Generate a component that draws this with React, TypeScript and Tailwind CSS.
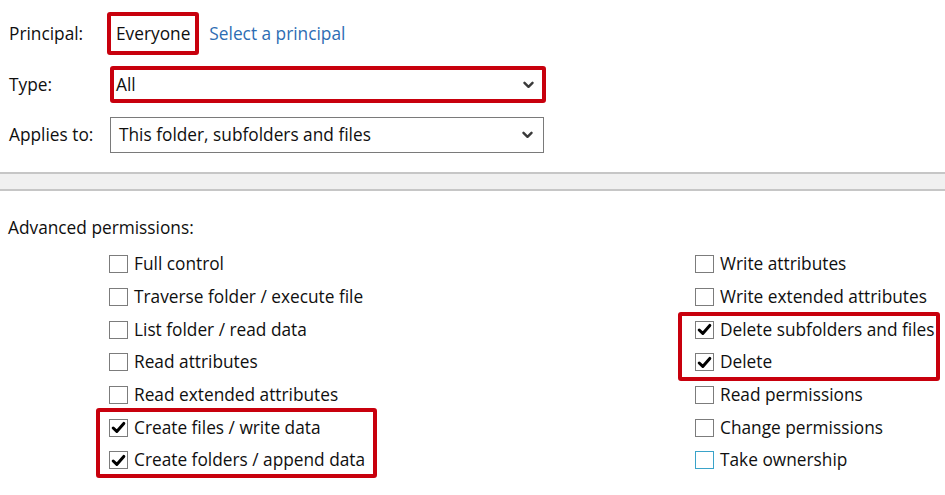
import React from 'react';

const RED = 'border-[#c8000d]';

function Chevron() {
  return (
    <svg width="11" height="8" viewBox="0 0 11 8" className="shrink-0">
      <path d="M1.5 1.8 L5.5 5.8 L9.5 1.8" fill="none" stroke="#3a3a3a" strokeWidth="2.4" strokeLinecap="round" strokeLinejoin="round" />
    </svg>
  );
}

function Box({ checked, hover }: { checked?: boolean; hover?: boolean }) {
  return (
    <span
      className={`w-[19px] h-[18px] shrink-0 border bg-white flex items-center justify-center ${
        hover ? 'border-[#3aa3c9]' : 'border-[#7c7c7c]'
      }`}
    >
      {checked && (
        <svg width="15" height="13" viewBox="0 0 15 13">
          <path d="M2.2 7 L5.8 10.4 L12.8 2.4" fill="none" stroke="#000" strokeWidth="3" strokeLinecap="round" strokeLinejoin="round" />
        </svg>
      )}
    </span>
  );
}

function Perm({ label, checked, hover }: { label: string; checked?: boolean; hover?: boolean }) {
  return (
    <div className="h-[32.67px] flex items-center gap-[6px]">
      <Box checked={checked} hover={hover} />
      <span className="whitespace-nowrap">{label}</span>
    </div>
  );
}

export default function App() {
  return (
    <div className="w-[945px] h-[495px] bg-white overflow-hidden text-[17.3px] leading-[24px] text-[#0f0f0f] font-['Open_Sans',sans-serif]">
      <div className="pt-[12px] pl-[9px]">
        <div className="flex items-center h-[43px]">
          <span className="w-[98px]">Principal:</span>
          <span className={`h-[43px] px-[5px] flex items-center border-4 ${RED} rounded-[3px]`}>Everyone</span>
          <a className="ml-[10px] text-[#2d6db3] cursor-pointer">Select a principal</a>
        </div>

        <div className="flex items-center mt-[11px]">
          <span className="w-[101px]">Type:</span>
          <div className={`w-[436px] h-[37px] border-4 ${RED} rounded-[3px] flex items-center justify-between pl-[2px] pr-[8px]`}>
            <span>All</span>
            <Chevron />
          </div>
        </div>

        <div className="flex items-center mt-[14px]">
          <span className="w-[101px]">Applies to:</span>
          <div className="w-[434px] h-[36px] border border-[#7a7a7a] flex items-center justify-between pl-[8px] pr-[10px]">
            <span>This folder, subfolders and files</span>
            <Chevron />
          </div>
        </div>
      </div>

      <div className="mt-[19px] h-[19px] border-y-2 border-[#c6c6c6] bg-[#f0f0f0]" />

      <div className="pl-[8px] mt-[25px]">Advanced permissions:</div>

      <div className="flex mt-[8px]">
        <div className="ml-[109px] w-[586px]">
          <Perm label="Full control" />
          <Perm label="Traverse folder / execute file" />
          <Perm label="List folder / read data" />
          <Perm label="Read attributes" />
          <Perm label="Read extended attributes" />
          <div className="relative">
            <Perm label="Create files / write data" checked />
            <Perm label="Create folders / append data" checked />
            <span className={`absolute pointer-events-none left-[-13px] top-[-3px] w-[281px] bottom-[-1px] border-4 ${RED} rounded-[3px]`} />
          </div>
        </div>
        <div>
          <Perm label="Write attributes" />
          <Perm label="Write extended attributes" />
          <div className="relative">
            <Perm label="Delete subfolders and files" checked />
            <Perm label="Delete" checked />
            <span className={`absolute pointer-events-none left-[-17px] top-[-1px] w-[262px] bottom-[-2px] border-4 ${RED} rounded-[3px]`} />
          </div>
          <Perm label="Read permissions" />
          <Perm label="Change permissions" />
          <Perm label="Take ownership" hover />
        </div>
      </div>
    </div>
  );
}
